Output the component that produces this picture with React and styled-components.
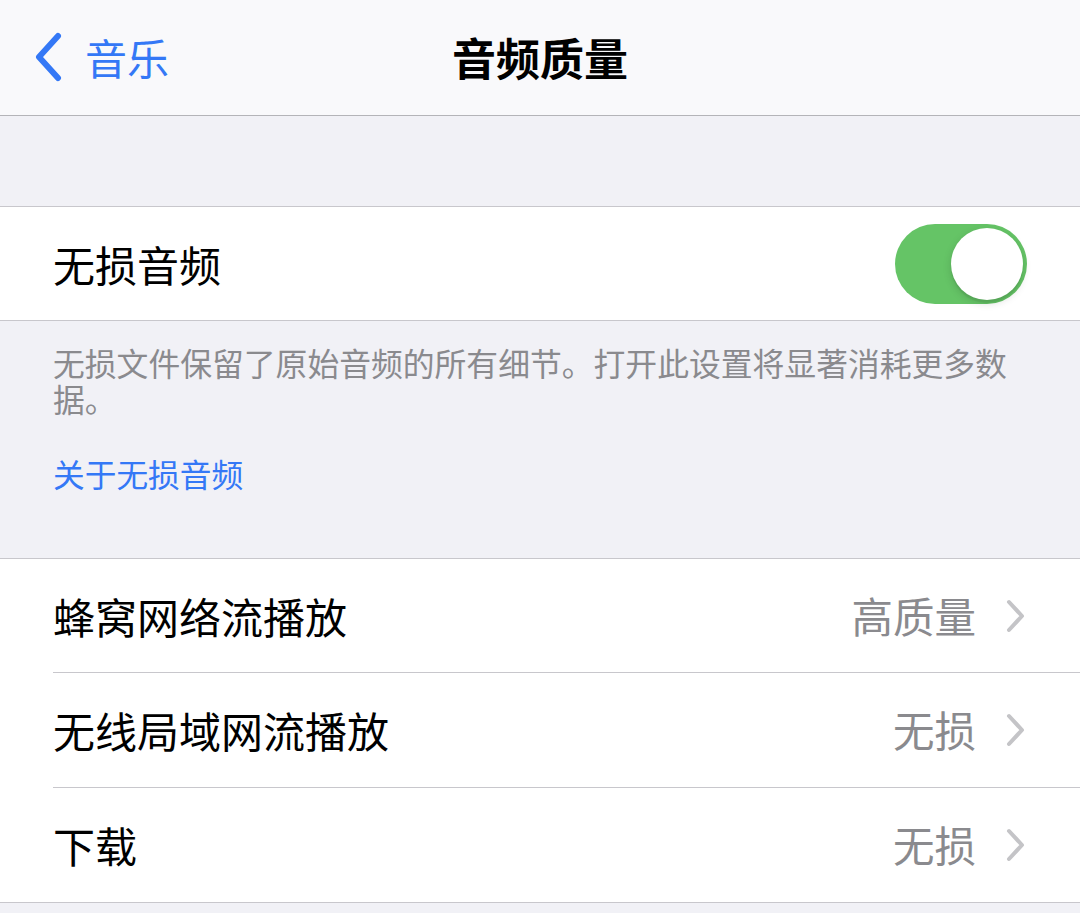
import React from "react";
import styled, { createGlobalStyle } from "styled-components";

const Global = createGlobalStyle`
  html, body { margin: 0; padding: 0; }
  body {
    background: #f1f1f6;
    font-family: "Noto Sans CJK SC", "Noto Sans", sans-serif;
    -webkit-font-smoothing: antialiased;
  }
`;

const Page = styled.div`
  width: 1080px;
  min-height: 913px;
  background: #f1f1f6;
  display: flex;
  flex-direction: column;
`;

const NavBar = styled.header`
  height: 115px;
  background: #f9f9fb;
  border-bottom: 1px solid #b4b4b8;
  display: grid;
  grid-template-columns: 1fr auto 1fr;
  align-items: center;
`;

const Back = styled.div`
  display: flex;
  align-items: center;
  gap: 22px;
  padding-left: 33px;
  color: #3478f6;
  font-size: 42px;
  line-height: 1;
  padding-bottom: 2px;
`;

const Title = styled.h1`
  margin: 0;
  font-size: 44px;
  font-weight: 700;
  color: #000;
  line-height: 1;
  padding-bottom: 2px;
`;

const Spacer = styled.div`
  height: 90px;
`;

const Group = styled.section`
  background: #fff;
  border-top: 1px solid #c8c7cc;
  border-bottom: 1px solid #c8c7cc;
`;

const Row = styled.div`
  padding-left: 53px;
  background: #fff;
`;

const RowInner = styled.div`
  height: 114px;
  display: flex;
  align-items: center;
  justify-content: space-between;
  padding-right: ${(p) => (p.$toggle ? "53px" : "55px")};
  border-bottom: ${(p) => (p.$last ? "none" : "1px solid #c8c7cc")};

  ${Row}:first-child > & {
    height: 113px;
  }
`;

const Label = styled.span`
  font-size: 42px;
  color: #000;
  line-height: 1;
`;

const Right = styled.div`
  display: flex;
  align-items: center;
  gap: 29px;
`;

const Value = styled.span`
  font-size: 41.5px;
  color: #8a8a8e;
  line-height: 1;
`;

const Switch = styled.div`
  width: 132px;
  height: 80px;
  border-radius: 40px;
  background: #65c466;
  position: relative;
  flex-shrink: 0;
`;

const Knob = styled.div`
  position: absolute;
  top: 4px;
  right: 4px;
  width: 72px;
  height: 72px;
  border-radius: 50%;
  background: #fff;
  box-shadow: 0 3px 8px rgba(0, 0, 0, 0.15), 0 3px 1px rgba(0, 0, 0, 0.06);
`;

const Footer = styled.div`
  height: 237px;
  box-sizing: border-box;
  padding: 23px 53px 0 53px;
`;

const FootText = styled.p`
  margin: 0;
  font-size: 31.8px;
  line-height: 36px;
  color: #8a8a8e;
`;

const FootLink = styled.a`
  display: block;
  margin-top: 39px;
  font-size: 31.7px;
  line-height: 36px;
  color: #3478f6;
  text-decoration: none;
`;

const BackChevron = () => (
  <svg width="30" height="50" viewBox="0 0 30 50" fill="none">
    <path d="M25 4 L6 25 L25 46" stroke="#3478f6" strokeWidth="6" strokeLinecap="round" strokeLinejoin="round" />
  </svg>
);

const Chevron = () => (
  <svg width="20" height="34" viewBox="0 0 20 34" fill="none">
    <path d="M4 3 L17 17 L4 31" stroke="#c4c4c7" strokeWidth="4" strokeLinecap="round" strokeLinejoin="round" />
  </svg>
);

const items = [
  { label: "蜂窝网络流播放", value: "高质量" },
  { label: "无线局域网流播放", value: "无损" },
  { label: "下载", value: "无损" },
];

export default function App() {
  return (
    <Page>
      <Global />
      <NavBar>
        <Back>
          <BackChevron />
          <span>音乐</span>
        </Back>
        <Title>音频质量</Title>
        <div />
      </NavBar>
      <Spacer />
      <Group>
        <Row>
          <RowInner $toggle $last>
            <Label>无损音频</Label>
            <Switch>
              <Knob />
            </Switch>
          </RowInner>
        </Row>
      </Group>
      <Footer>
        <FootText>无损文件保留了原始音频的所有细节。打开此设置将显著消耗更多数据。</FootText>
        <FootLink>关于无损音频</FootLink>
      </Footer>
      <Group>
        {items.map((it, i) => (
          <Row key={it.label}>
            <RowInner $last={i === items.length - 1}>
              <Label>{it.label}</Label>
              <Right>
                <Value>{it.value}</Value>
                <Chevron />
              </Right>
            </RowInner>
          </Row>
        ))}
      </Group>
    </Page>
  );
}
